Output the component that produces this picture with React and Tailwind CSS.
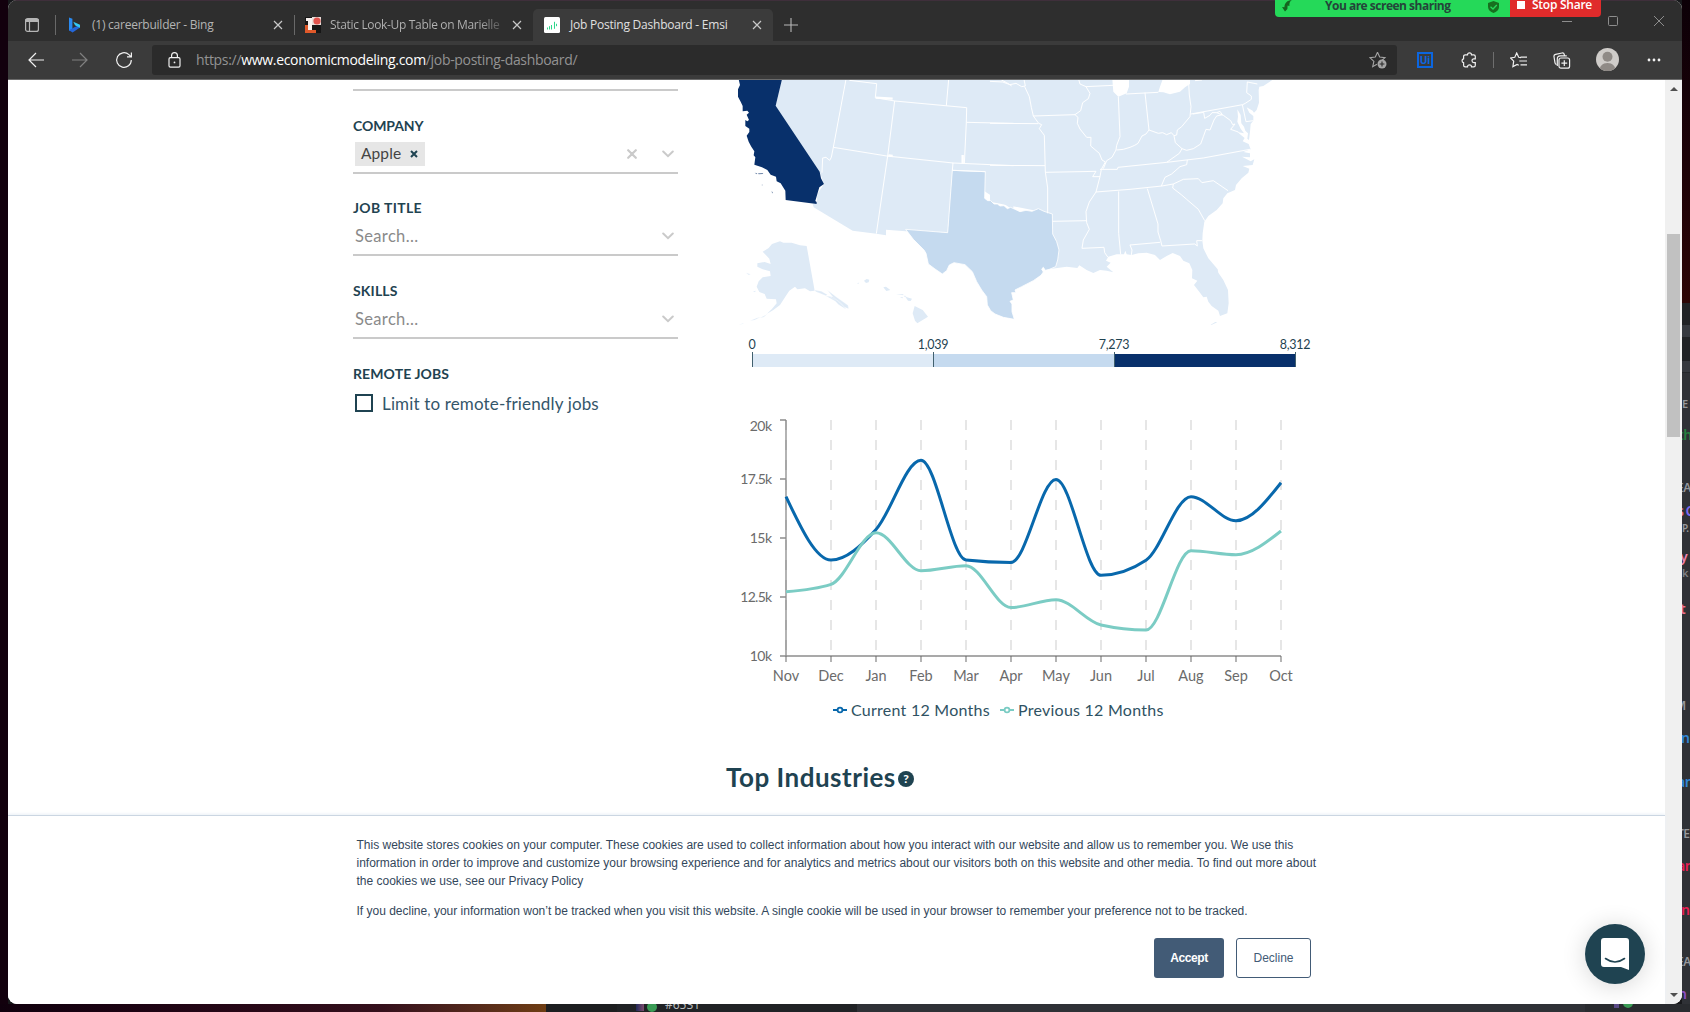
import React from "react";

const SITE = "font-['Lato','Open_Sans',sans-serif]";
const UI = "font-['Open_Sans','Noto_Sans',sans-serif]";

/* ---------- browser chrome ---------- */

function Close({ className = "" }) {
  return (
    <svg className={"shrink-0 " + className} width="10" height="10" viewBox="0 0 10 10" stroke="#c8c8c8" strokeWidth="1.2" fill="none">
      <path d="M1 1l8 8M9 1l-8 8" />
    </svg>
  );
}

function TabBar() {
  return (
    <div className="flex h-[41px] items-end bg-[#2e2e2e] border-t border-[#3f2f3b]">
      <div className="flex h-[32px] w-[525px] shrink-0 items-center">
        <svg className="ml-[16px] shrink-0" width="16" height="16" viewBox="0 0 16 16" fill="none" stroke="#b5b5b5" strokeWidth="1.2">
          <rect x="1.6" y="1.6" width="12.8" height="12.8" rx="2" />
          <path d="M2 2.5h12v2H2z" fill="#b5b5b5" />
          <path d="M5.5 5v9" />
        </svg>
        <div className="ml-[15px] h-5 w-px bg-[#696969]" />
        <svg className="ml-[12px] shrink-0" width="13" height="16" viewBox="0 0 13 16">
          <path d="M1 0.5l3.4 1.3v10L1 14z" fill="#2a8af0" />
          <path d="M1 13.2l5.4-3L12 8v2.6L4.6 15.6z" fill="#2466d8" />
          <path d="M5.3 4.7l6.7 3v3L8.3 8.9 7 8.3z" fill="#35c8f2" />
        </svg>
        <span className={UI + " ml-[11px] w-[181px] text-[12px] text-[#b4b4b4] tracking-[-0.24px] whitespace-nowrap"}>(1) careerbuilder - Bing</span>
        <Close />
        <div className="ml-[11px] h-5 w-px bg-[#696969]" />
        <svg className="ml-[10px] shrink-0" width="16" height="16" viewBox="0 0 16 16">
          <rect width="16" height="16" fill="#161616" />
          <path d="M0 8h5v5h6v3H0z" fill="#e0592a" />
          <path d="M3 1h4v12H3zM1 1h6v3H1z" fill="#f7f0ee" />
          <rect x="7" y="0" width="9" height="8" fill="#e9dcd8" />
          <circle cx="12" cy="4" r="3.6" fill="#e0524c" />
        </svg>
        <span className={UI + " ml-[9px] w-[175px] overflow-hidden whitespace-nowrap bg-gradient-to-r from-[#b4b4b4] from-85% to-[#444444] bg-clip-text text-[12px] tracking-[-0.33px] text-transparent"}>Static Look-Up Table on Marielle</span>
        <Close className="ml-[7px]" />
      </div>
      <div className="flex h-[32px] w-[240px] shrink-0 items-center rounded-t-[5px] bg-[#3b3b3b]">
        <svg className="ml-[11px] shrink-0" width="16" height="16" viewBox="0 0 16 16">
          <rect width="16" height="16" rx="1.5" fill="#fff" />
          <path d="M3.5 10.500v2M5.500 9.200V12.500M7.500 8V12.500M10.500 4.800V11.800M12.500 6.800v2.400" stroke="#2fd68c" strokeWidth="1" />
        </svg>
        <span className={UI + " ml-[10px] w-[182px] whitespace-nowrap text-[12px] tracking-[-0.23px] text-[#e0e0e0]"}>Job Posting Dashboard - Emsi</span>
        <Close />
      </div>
      <div className="flex h-[32px] grow items-center">
        <svg className="ml-[11px]" width="14" height="14" viewBox="0 0 14 14" stroke="#b8b8b8" strokeWidth="1.1">
          <path d="M7 0v14M0 7h14" />
        </svg>
        <div className="mb-[9px] ml-auto mr-[18px] flex items-center gap-[36px]">
          <svg width="10" height="10" viewBox="0 0 10 10" stroke="#8d8d8d"><path d="M0 5.5h10" /></svg>
          <svg width="10" height="10" viewBox="0 0 10 10" stroke="#8d8d8d" fill="none"><rect x="0.5" y="0.5" width="9" height="9" rx="1" /></svg>
          <svg width="10" height="10" viewBox="0 0 10 10" stroke="#8d8d8d"><path d="M0 0l10 10M10 0L0 10" /></svg>
        </div>
      </div>
    </div>
  );
}

function Toolbar() {
  return (
    <div className="flex h-[39px] items-center border-b border-[#6b6b6b] bg-[#3b3b3b]">
      <svg className="ml-[20px]" width="16" height="16" viewBox="0 0 16 16" fill="none" stroke="#f0f0f0" strokeWidth="1.2"><path d="M16 8H1M8 1L1 8l7 7" /></svg>
      <svg className="ml-[28px]" width="16" height="16" viewBox="0 0 16 16" fill="none" stroke="#808080" strokeWidth="1.2"><path d="M0 8h15M8 1l7 7-7 7" /></svg>
      <svg className="ml-[27px]" width="18" height="18" viewBox="0 0 18 18" fill="none" stroke="#f0f0f0" strokeWidth="1.2"><path d="M16.3 9a7.3 7.3 0 1 1-2.4-5.4l2 2M16.4 1.4v4.4H12" /></svg>
      <div className="ml-[19px] flex h-[30px] w-[1245px] items-center rounded-[3px] bg-[#2b2b2b]">
        <svg className="-mt-px ml-[16px]" width="13" height="16" viewBox="0 0 13 16" fill="none" stroke="#f0f0f0" strokeWidth="1.2">
          <rect x="1" y="5.6" width="11" height="9.6" rx="1.4" />
          <path d="M3.6 5.5V3.6a2.9 2.9 0 0 1 5.8 0v1.9" />
          <circle cx="6.5" cy="10.4" r="0.9" fill="#f0f0f0" stroke="none" />
        </svg>
        <span className={UI + " -mt-px ml-[15px] whitespace-nowrap text-[14px] tracking-[-0.32px] text-[#939393]"}>
          https://<span className="text-white">www.economicmodeling.com</span>/job-posting-dashboard/
        </span>
        <svg className="ml-auto mr-[10px]" width="18" height="18" viewBox="0 0 18 18" fill="none" stroke="#a5a5a5" strokeWidth="1.1">
          <path d="M8.5 1.2l2.2 4.9 5.3.5-3.9 3.6M8.5 1.2L6.3 6.1.9 6.7l4 3.7-1.2 5.3 4.2-2.4" />
          <circle cx="13" cy="13" r="4.5" fill="#a5a5a5" stroke="none" />
          <path d="M13 10.6v4.8M10.6 13h4.8" stroke="#2b2b2b" />
        </svg>
      </div>
      <div className="ml-[20px] flex h-4 w-4 items-center justify-center border-2 border-[#0b66e0] font-['Roboto',sans-serif] text-[11px] font-bold leading-none text-[#0b66e0]">Ui</div>
      <svg className="ml-[28px]" width="16" height="17" viewBox="0 0 16 17" fill="none" stroke="#f0f0f0" strokeWidth="1.2">
        <path d="M4.200 2.800h2.300a2 2 0 0 1 4 0h2.200a1.600 1.600 0 0 1 1.600 1.600v2.400h-1.400a1.900 1.900 0 0 0 0 3.800h1.400v2.600a1.600 1.600 0 0 1-1.600 1.600h-2.200a2 2 0 0 0-4 0H4.200a1.600 1.600 0 0 1-1.600-1.600v-2.500a2 2 0 0 1 0-3.900V4.400a1.600 1.600 0 0 1 1.600-1.600z" />
      </svg>
      <div className="ml-[16px] h-4 w-px bg-[#6e6e6e]" />
      <svg className="ml-[16px]" width="18" height="16" viewBox="0 0 18 16" fill="none" stroke="#f0f0f0" strokeWidth="1.2">
        <path d="M11 5.6L8.7 5.3 6.7 1 4.8 5.3l-4.2.6 3.1 3.3-.8 5.4 4.2-2.2 1.7.9M10.5 5.2h6.5M9.3 9h7.7M10.5 12.8h6.5" />
      </svg>
      <svg className="ml-[25px]" width="18" height="17" viewBox="0 0 18 17" fill="none" stroke="#f0f0f0" strokeWidth="1.2">
        <rect x="6" y="6" width="10.6" height="10.2" rx="2" />
        <path d="M11.3 8.2v5.8M8.4 11.1h5.8M3.4 12.5A2 2 0 0 1 2 10.800L1 4.6A2 2 0 0 1 2.600 2.300L9 1a2 2 0 0 1 2.3 1.600l.3 1.200M4.300 14V6.800a3 3 0 0 1 3-3h6.500" />
      </svg>
      <svg className="-mt-px ml-[25px]" width="23" height="23" viewBox="0 0 23 23">
        <clipPath id="face"><circle cx="11.500" cy="11.500" r="11.500" /></clipPath>
        <g clipPath="url(#face)">
          <rect width="23" height="23" fill="#cfccc9" />
          <circle cx="11.500" cy="8.700" r="5" fill="#8f8a86" />
          <path d="M3.500 23c0-5 3-8 8-8s8 3 8 8z" fill="#8f8a86" />
        </g>
      </svg>
      <svg className="ml-[28px]" width="14" height="4" viewBox="0 0 14 4" fill="#f0f0f0"><circle cx="2" cy="2" r="1.400" /><circle cx="7" cy="2" r="1.400" /><circle cx="12" cy="2" r="1.400" /></svg>
    </div>
  );
}

function ShareBar() {
  return (
    <div className={UI + " absolute left-[1275px] top-0 z-10 flex h-[17px] w-[326px] overflow-hidden rounded-b-[4px] font-bold"}>
      <div className="flex w-[235px] items-start bg-[#25d959] text-[#24453a]">
        <svg className="ml-[7px]" width="10" height="12" viewBox="0 0 10 12" fill="#14641f"><path d="M9.800 0C8 1.300 7.200 3 7.400 6L5.600 5.600 5.400 9 3 11.500 0 7l2.400.2C2.600 3 5 .4 9.800 0z" /></svg>
        <span className="ml-[33px] -mt-[3px] w-[150px] whitespace-nowrap text-[12px] leading-[17px] tracking-[-0.5px]">You are screen sharing</span>
        <svg className="ml-[13px] mt-px" width="11" height="12" viewBox="0 0 11 12"><path d="M5.500 0L11 2v4c0 3-2.500 5-5.500 6C2.500 11 0 9 0 6V2z" fill="#17701f" /><path d="M2.500 5.800L5 8l3.800-4" stroke="#25d959" strokeWidth="1.300" fill="none" /></svg>
      </div>
      <div className="flex w-[91px] items-start bg-[#e02b2b] text-white">
        <div className="ml-[7px] mt-px h-2 w-2 bg-white" />
        <span className="ml-[7px] -mt-[3px] whitespace-nowrap text-[12px] font-semibold leading-[16px] tracking-[-0.25px]">Stop Share</span>
      </div>
    </div>
  );
}

/* ---------- filters ---------- */

function Chevron() {
  return (
    <svg className="mr-[4px]" width="12" height="8" viewBox="0 0 12 8" fill="none" stroke="#cacaca" strokeWidth="2" strokeLinecap="round"><path d="M1.200 1.500L6 6.200l4.800-4.700" /></svg>
  );
}

function Label({ children, className = "" }) {
  return <div className={SITE + " h-5 text-[14px] font-bold leading-5 text-[#1f4351] " + className}>{children}</div>;
}

function Filters() {
  return (
    <div className="w-[325px] shrink-0 pt-[9px]">
      <div className="h-[2px] bg-[#cacaca]" />
      <Label className="mt-[25px] tracking-[-0.1px]">COMPANY</Label>
      <div className="flex h-[38px] items-center border-b-2 border-[#cacaca]">
        <div className={SITE + " ml-[2px] flex h-6 w-[70px] items-center bg-[#e6e6e6] text-[15.500px] text-[#444]"}>
          <span className="ml-[6px] w-[41px] tracking-[0.1px]">Apple</span>
          <svg className="ml-[8px]" width="8" height="8" viewBox="0 0 8 8" stroke="#1f4351" strokeWidth="2"><path d="M1 1l6 6M7 1L1 7" /></svg>
        </div>
        <svg className="ml-auto mr-[25px]" width="10" height="10" viewBox="0 0 10 10" stroke="#cacaca" strokeWidth="2.200" strokeLinecap="round"><path d="M1.200 1.200l7.600 7.600M8.800 1.200L1.200 8.800" /></svg>
        <Chevron />
      </div>
      <Label className="mt-[24px] tracking-[0.350px]">JOB TITLE</Label>
      <div className="flex h-[38px] items-center justify-between border-b-2 border-[#cacaca]">
        <span className={SITE + " ml-[2px] text-[16.500px] tracking-[0.35px] text-[#8a8a8a]"}>Search...</span>
        <Chevron />
      </div>
      <Label className="mt-[25px] tracking-[0.150px]">SKILLS</Label>
      <div className="flex h-[38px] items-center justify-between border-b-2 border-[#cacaca]">
        <span className={SITE + " ml-[2px] text-[16.500px] tracking-[0.35px] text-[#8a8a8a]"}>Search...</span>
        <Chevron />
      </div>
      <Label className="mt-[25px] tracking-[0.100px]">REMOTE JOBS</Label>
      <div className="mt-[8px] flex h-[22px] items-center">
        <div className="ml-[2px] h-[18px] w-[18px] border-2 border-[#1f4351]" />
        <span className={SITE + " ml-[9px] mt-px whitespace-nowrap text-[17px] tracking-[0.150px] text-[#34566a]"}>Limit to remote-friendly jobs</span>
      </div>
    </div>
  );
}

/* ---------- map ---------- */

function UsMap() {
  return (
    <svg className="-ml-[6px] block shrink-0" width="594" height="252" viewBox="720 80 594 252">
      <g transform="translate(720 70) scale(0.33333)" strokeLinejoin="round">
        <path fill="#deeaf6" d="M186 28L167 107L299 305L312 342L292 372L290 402L278 402L281 412L398 482L469 491L498 496L498 479L557 484L683 488L697 301L880 420L880 28Z" />
        <g transform="translate(810 0)">
          <path fill="#deeaf6" d="M0 28L367 28L370 65L385 80L410 70L417 50L417 28L518 28L510 50L505 66L520 67L540 73L570 65L585 52L600 42L600 28L850 28L820 48L808 50L806 60L807 98L800 120L792 128L788 122L770 112L778 128L790 138L790 152L782 162L780 185L777 210L772 206L774 190L766 182L762 170L754 160L752 135L742 118L744 140L742 155L752 176L762 190L742 186L764 204L758 214L776 222L782 238L760 246L780 250L780 262L756 260L782 274L793 268L788 285L758 288L778 296L775 308L755 325L738 345L735 360L712 370L700 385L698 400L680 420L655 438L643 455L638 490L637 512L640 535L655 565L683 598L685 608L700 630L714 660L716 700L712 730L690 738L685 722L665 708L655 695L650 680L640 682L630 668L612 645L622 632L606 625L607 600L598 580L580 572L570 558L548 549L530 558L510 570L495 555L470 548L445 550L425 555L410 553L406 542L402 553L380 553L355 560L348 572L362 578L350 590L370 607L350 602L330 600L310 609L290 600L268 586L262 594L230 590L180 597L187 432L0 395Z" />
        </g>
        <path fill="#c5daef" stroke="#fff" strokeWidth="2.500" d="M697 301L796 305L794 385L803 392L812 392L822 402L832 402L840 408L852 407L862 416L872 412L885 418L900 425L918 421L936 424L955 416L972 424L997 432L998 492L1010 515L1017 540L1013 570L1007 590L988 598L976 601L970 592L965 597L970 606L963 616L940 632L905 650L885 660L888 668L875 668L880 690L870 694L876 702L876 725L883 748L850 742L825 732L812 722L802 705L800 680L785 660L770 635L757 605L735 584L702 578L688 585L680 602L667 612L645 597L625 582L618 550L612 540L580 508L557 478L683 488Z" />
        <path fill="#08306b" d="M56 28L60 45L54 58L54 80L62 95L68 108L68 124L82 122L87 128L80 134L87 150L82 154L76 150L76 168L88 176L88 186L80 197L86 215L94 230L103 244L101 256L106 262L103 284L126 292L142 300L152 314L168 320L170 334L182 340L196 362L197 390L290 402L290 396L286 393L292 372L298 352L312 342L303 325L299 305L167 107L186 28Z" />
        <g fill="#08306b" fillOpacity="0.600"><path d="M104 308l8 2-2 3zM114 310l16-1-2 3-12 1zM123 345l6-1v2zM155 346l10 3zM155 362l4 7-3 1z" /></g>
        <g fill="none" stroke="#fff" strokeWidth="3">
          <path d="M378 28L340 232L334 262L329 271L318 262L308 264L306 308M340 232L500 258L699 279L697 301L796 305M524 93L503 258L469 491M388 31L470 41L466 83L524 93L740 113L739 157L733 281M686 28L679 107M739 157L880 160M699 279L880 287M844 30L860 38L875 48" />
          <path d="M467 83L518 86M505 256L518 258M728 255L728 281" strokeWidth="7" />
        </g>
        <g fill="none" stroke="#fff" strokeWidth="3" strokeLinejoin="round" transform="translate(810 0)">
          <path d="M0 34L38 36L60 44L78 40L95 50L106 48L102 28M104 50L118 80L124 112L130 138L146 160L155 164L148 176L163 196L166 306L173 354L173 430M0 160L145 161M0 286L165 287M130 138L255 134L264 142L262 160L270 177L290 202L303 202L302 228L328 250L336 270L346 276L334 298L330 320L308 320L318 304L166 307M255 134L272 122L278 98L295 86L300 70L288 50L270 42L266 28M288 50L369 46M385 80L390 200L380 226L378 240L366 262L350 272L340 296M408 72L505 67M465 68L477 180L468 192L456 198L444 220L434 226L420 232L400 238L380 240M477 180L505 190L518 188L530 194L544 188L552 197L560 195L562 180L575 170L600 140L603 110L598 75L596 40M552 197L556 218L576 236L568 250L530 277M603 132L758 104L766 100L784 88L784 78L770 68L772 36L802 42M609 132L641 127L644 145L660 136L666 128L680 128L690 124L697 134L680 138L672 150L660 180L648 178L640 200L632 222L610 236L590 241L576 236M680 128L700 136L722 152L728 164L735 162L722 178L745 186M757 104L768 155L790 152M330 298L382 298L384 292L530 277L640 264L780 238M318 366L420 358L516 348L550 342M592 270L590 284L570 290L545 312L525 322L514 348M550 342L580 328L625 326L636 338L670 332L714 362M550 342L548 354L575 375L590 388L625 418L644 452M318 366L330 320M318 366L298 396L288 425L290 458L298 478L280 510L276 535L342 532L344 548L354 562M386 364L386 490L392 553M472 356L504 462L504 486L512 512L516 528L614 522L622 528L620 512L636 512M510 517L420 525L426 540L424 555M188 454L290 452M615 32L636 30" />
        </g>
        <g fill="#deeaf6">
          <path d="M180 514L190 518L215 518L240 526L260 528L284 662L270 664L255 655L232 658L225 650L208 662L196 680L180 705L160 720L140 732L155 718L170 700L168 688L140 686L134 672L118 666L110 650L116 634L128 622L152 618L150 604L128 598L112 590L112 580L134 576L152 582L148 566L128 545L146 534L156 522Z" />
          <path d="M78 608l14 5-6 2zM98 664l10-2-3 5zM56 764l16-5-4 3zM90 752l20-8 12-3-18 9zM120 744l22-12-10 9zM284 660l20 4 18 10-4 3-30-12zM322 660l28 22 34 24 2 10-12-4-22-20-20-10 6-2zM318 678l20 2 28 22 12 16-22-14-10-10z" stroke="#fff" strokeWidth="0.800" />
          <path d="M432 632l8-5 8 2-2 8-8 2zM412 639l6-1-4 4zM490 652l8-2 13 10-12 3zM528 672l22 1v3zM540 682l8-1v4zM556 680l20 6-4 7-8-1zM552 677l8 1-6 3zM584 708L608 720L624 740L592 760L585 752L578 730Z" />
          <path d="M1472 764l14-8 6 1-18 8z" />
        </g>
      </g>
    </svg>
  );
}

function MapLegend() {
  return (
    <div className="ml-[26px] w-[544px]">
      <div className={SITE + " flex h-[16px] text-[12.500px] leading-[17px] tracking-[-0.300px] text-[#1f4351]"}>
        <span className="-ml-[20px] w-[40px] shrink-0 text-center">0</span>
        <span className="ml-[141px] w-[40px] shrink-0 text-center">1,039</span>
        <span className="ml-[141px] w-[40px] shrink-0 text-center">7,273</span>
        <span className="ml-[141px] w-[40px] shrink-0 text-center">8,312</span>
      </div>
      <div className="flex h-[15px] items-end">
        <div className="h-[15px] w-px bg-[#41606e]" />
        <div className="h-[13px] w-[180px] bg-[#deeaf6]" />
        <div className="h-[15px] w-px bg-[#41606e]" />
        <div className="h-[13px] w-[180px] bg-[#c5daef]" />
        <div className="h-[15px] w-px bg-[#41606e]" />
        <div className="h-[13px] w-[180px] bg-[#08306b]" />
        <div className="h-[15px] w-px bg-[#41606e]" />
      </div>
    </div>
  );
}

/* ---------- chart ---------- */

const MONTHS = ["Nov", "Dec", "Jan", "Feb", "Mar", "Apr", "May", "Jun", "Jul", "Aug", "Sep", "Oct"];
const CURRENT = [496.7, 560, 529.5, 460.3, 560, 562.5, 479.5, 575.3, 560.3, 496.7, 520.7, 482.7];
const PREVIOUS = [591.7, 584.3, 532.7, 570.7, 565.7, 607.5, 599.7, 625, 630, 550.7, 554.7, 531];
const X0 = 786;
const STEP = 45;

/* Monotone cubic interpolation for evenly spaced points */
function monotone(ys) {
  const n = ys.length;
  const s = [];
  for (let i = 0; i < n - 1; i++) s.push((ys[i + 1] - ys[i]) / STEP);
  const t = new Array(n).fill(0);
  for (let i = 1; i < n - 1; i++) {
    const p = (s[i - 1] + s[i]) / 2;
    t[i] = (Math.sign(s[i - 1]) + Math.sign(s[i])) * Math.min(Math.abs(s[i - 1]), Math.abs(s[i]), 0.5 * Math.abs(p));
  }
  t[0] = (3 * s[0] - t[1]) / 2;
  t[n - 1] = (3 * s[n - 2] - t[n - 2]) / 2;
  let d = `M${X0} ${ys[0]}`;
  for (let i = 0; i < n - 1; i++) {
    const x = X0 + i * STEP;
    const h = STEP / 3;
    d += `C${x + h} ${ys[i] + h * t[i]} ${x + 2 * h} ${ys[i + 1] - h * t[i + 1]} ${x + STEP} ${ys[i + 1]}`;
  }
  return d;
}

function TrendChart() {
  return (
    <svg className="-ml-[6px] block shrink-0" width="594" height="280" viewBox="720 410 594 280">
      {MONTHS.map((m, i) => (
        <path key={m} d={`M${X0 + i * STEP} 420V656`} stroke="#ccc" strokeOpacity="0.600" strokeWidth="1.600" strokeDasharray="10 10" />
      ))}
      <g stroke="#666" strokeOpacity="0.750" strokeWidth="1.300" fill="none">
        <path d="M786 420V656M780 420h6M780 479h6M780 538h6M780 597h6M780 656h501" />
        {MONTHS.map((m, i) => <path key={m} d={`M${X0 + i * STEP} 656v6`} />)}
      </g>
      <path d={monotone(CURRENT)} fill="none" stroke="#0868ac" strokeWidth="3" />
      <path d={monotone(PREVIOUS)} fill="none" stroke="#7bccc4" strokeWidth="3" />
      <g className={SITE} fill="#6b6b6b" fontSize="14.500">
        {MONTHS.map((m, i) => <text key={m} x={X0 + i * STEP} y="680.500" textAnchor="middle">{m}</text>)}
        <g textAnchor="end" className="tracking-[-0.500px]" fontSize="14">
          <text x="771.500" y="431">20k</text>
          <text x="771.500" y="484" className="tracking-[-0.700px]">17.5k</text>
          <text x="771.500" y="543">15k</text>
          <text x="771.500" y="602" className="tracking-[-0.700px]">12.5k</text>
          <text x="771.500" y="661">10k</text>
        </g>
      </g>
    </svg>
  );
}

function SeriesMark({ color }) {
  return (
    <svg width="14" height="14" viewBox="0 0 14 14" fill="none" stroke={color} strokeWidth="1.800"><path d="M0 7h4.600M9.400 7H14" /><circle cx="7" cy="7" r="2.400" /></svg>
  );
}

function Results() {
  return (
    <div className="ml-[48px] flex w-[588px] flex-col">
      <UsMap />
      <div className="mt-[4px]"><MapLegend /></div>
      <div className="mt-[43px]"><TrendChart /></div>
      <div className={SITE + " ml-[107px] mt-[9px] flex h-[22px] items-center text-[16px] tracking-[0.250px] text-[#2f5263]"}>
        <SeriesMark color="#0868ac" />
        <span className="ml-[4px] w-[149px] whitespace-nowrap">Current 12 Months</span>
        <SeriesMark color="#7bccc4" />
        <span className="ml-[4px] whitespace-nowrap">Previous 12 Months</span>
      </div>
      <div className="mt-[39px] flex h-[34px] items-center">
        <h2 className={SITE + " w-[172px] whitespace-nowrap text-[26px] font-bold tracking-[0.500px] text-[#1f4351]"}>Top Industries</h2>
        <div className={SITE + " mt-[4px] flex h-4 w-4 items-center justify-center rounded-full bg-[#1f4351] text-[12px] font-black leading-none text-white"}>?</div>
      </div>
    </div>
  );
}

function CookieBanner() {
  return (
    <div className="h-[189px] shrink-0 border-t border-[#cbd6e2] bg-white pl-[348.500px] pt-[20px] font-['Liberation_Sans',Arial,sans-serif] text-[12px] leading-[18px] text-[#33475b] shadow-[0_-1px_3px_#eaf0f6]">
      <p className="whitespace-nowrap">
        This website stores cookies on your computer. These cookies are used to collect information about how you interact with our website and allow us to remember you. We use this<br />
        information in order to improve and customize your browsing experience and for analytics and metrics about our visitors both on this website and other media. To find out more about<br />
        the cookies we use, see our Privacy Policy
      </p>
      <p className="mt-[12px] whitespace-nowrap">If you decline, your information won’t be tracked when you visit this website. A single cookie will be used in your browser to remember your preference not to be tracked.</p>
      <div className="ml-[797.500px] mt-[18px] flex gap-[12px]">
        <button className="h-10 w-[70px] rounded-[3px] bg-[#425b76] font-bold tracking-[-0.400px] text-white">Accept</button>
        <button className="h-10 w-[75px] rounded-[3px] border border-[#425b76] text-[#425b76]">Decline</button>
      </div>
    </div>
  );
}

function ChatLauncher() {
  return (
    <div className="absolute bottom-[20px] right-[20px] flex h-[60px] w-[60px] items-center justify-center rounded-full bg-[#1f4351] shadow-[0_2px_24px_rgba(0,0,0,0.160)]">
      <svg width="28" height="32" viewBox="0 0 28 32"><path d="M3 0h22a3 3 0 0 1 3 3v29l-8-3H3a3 3 0 0 1-3-3V3a3 3 0 0 1 3-3z" fill="#fff" /><path d="M4.500 20.500q9.500 7 19 0" fill="none" stroke="#1f4351" strokeWidth="1.600" strokeLinecap="round" /></svg>
    </div>
  );
}

function Scrollbar() {
  return (
    <div className="flex w-[17px] shrink-0 flex-col items-center bg-[#f0f0f0]">
      <svg className="mt-[7px]" width="8" height="4" viewBox="0 0 8 4" fill="#505050"><path d="M4 0l4 4H0z" /></svg>
      <div className="mt-[143px] h-[203px] w-[13px] bg-[#c1c1c1]" />
      <svg className="mb-[7px] mt-auto" width="8" height="4" viewBox="0 0 8 4" fill="#505050"><path d="M0 0h8L4 4z" /></svg>
    </div>
  );
}

/* ---------- chat window behind the browser ---------- */

function MemberSliver() {
  return (
    <div className="flex h-[1004px] w-[8px] shrink-0 flex-col overflow-hidden bg-[#2f3136] font-['Noto_Sans',sans-serif] text-[14px] font-semibold tracking-[-0.500px]">
      <div className="h-[303px] shrink-0 bg-gradient-to-b from-[#0c0007] to-[#2c0505]" />
      <div className="h-[22px] shrink-0 bg-[#202225]" />
      <div className="h-[12px] shrink-0 bg-[#36393f]" />
      <div className="h-[24px] shrink-0 bg-[#202225]" />
      <div className="h-[12px] shrink-0 border-b border-[#25272b] bg-[#36393f]" />
      <div className="mt-[21px] h-[20px] shrink-0 text-[11px] leading-[20px] text-[#96989d]">E</div>
      <div className="-ml-[4px] mt-[11px] h-[20px] shrink-0 leading-[20px] text-[#23803f]">th</div>
      <div className="-ml-[5px] mt-[33px] h-[20px] shrink-0 text-[12px] leading-[20px] text-[#96989d]">EA</div>
      <div className="-ml-[5px] mt-[3px] h-[20px] shrink-0 whitespace-nowrap leading-[20px] text-[#e8748a]">s<span className="ml-[2px] text-[#7d6bf0]">C</span></div>
      <div className="-mt-px h-[16px] shrink-0 text-[10px] leading-[16px] text-[#96989d]">P.</div>
      <div className="-ml-[2px] mt-[11px] h-[20px] shrink-0 leading-[20px] text-[#ee82ad]">y</div>
      <div className="-mt-px h-[14px] shrink-0 text-[11px] leading-[14px] text-[#7d7f84]">k</div>
      <div className="-ml-[2px] mt-[17px] h-[24px] shrink-0 leading-[24px] text-[#ee6f8b]">t</div>
      <div className="-ml-[7px] mt-[75px] h-[20px] shrink-0 text-[12px] leading-[20px] text-[#96989d]">M</div>
      <div className="-ml-px mt-[12px] h-[20px] shrink-0 leading-[20px] text-[#2f86d6]">n</div>
      <div className="-ml-[5px] mt-[24px] h-[20px] shrink-0 leading-[20px] text-[#2f86d6]">an</div>
      <div className="-ml-[5px] mt-[32px] h-[20px] shrink-0 whitespace-nowrap text-[12px] leading-[20px] text-[#96989d]">TE</div>
      <div className="-ml-[5px] mt-[12px] h-[20px] shrink-0 leading-[20px] text-[#e91e55]">an</div>
      <div className="-ml-px mt-[24px] h-[20px] shrink-0 leading-[20px] text-[#e91e55]">n</div>
      <div className="-ml-[5px] mt-[32px] h-[20px] shrink-0 text-[12px] leading-[20px] text-[#96989d]">EA</div>
      <div className="-ml-[4px] mt-[12px] h-[20px] shrink-0 leading-[20px] text-[#8e4fc4]">n</div>
    </div>
  );
}

function BottomSliver() {
  return (
    <div className="flex h-[8px] w-full overflow-hidden">
      <div className="w-[546px] shrink-0 bg-gradient-to-r from-[#10000d] via-[#35101c] via-70% to-[#6e3d12]" />
      <div className="w-[71px] shrink-0 bg-[#1d1e20]" />
      <div className="flex w-[240px] shrink-0 items-start bg-[#202225]">
        <div className="ml-[19px] h-[7px] w-[8px] bg-gradient-to-r from-[#22285a] to-[#7c4a6c]" />
        <div className="-mt-[2px] ml-[3px] h-[10px] w-[10px] shrink-0 rounded-full bg-[#3a9b55]" />
        <span className="-mt-[7px] ml-[8px] font-['Noto_Sans',sans-serif] text-[12px] leading-[16px] text-[#b9bbbe]">#6531</span>
      </div>
      <div className="w-[728px] shrink-0 bg-[#2f3136]" />
      <div className="flex grow items-start bg-[#292b2f]">
        <div className="ml-[29px] h-[4px] w-[5px] bg-[#5a4a86]" />
        <div className="-mt-[6px] ml-[4px] h-[10px] w-[10px] rounded-full bg-[#3a9b55]" />
      </div>
    </div>
  );
}

export default function App() {
  return (
    <div className="relative h-[1012px] w-[1690px] overflow-hidden bg-[#17181b]">
      <div className="flex h-[1004px]">
        <div className="w-[8px] shrink-0 bg-[#12000d]" />
        <div className="flex w-[1674px] shrink-0 flex-col overflow-hidden rounded-[9px] bg-white">
          <TabBar />
          <Toolbar />
          <div className="flex h-[924px]">
            <div className="relative flex w-[1657px] flex-col">
              <div className="flex h-[735px] shrink-0 overflow-hidden bg-white pl-[345px]">
                <Filters />
                <Results />
              </div>
              <CookieBanner />
              <ChatLauncher />
            </div>
            <Scrollbar />
          </div>
        </div>
        <MemberSliver />
      </div>
      <BottomSliver />
      <ShareBar />
    </div>
  );
}
